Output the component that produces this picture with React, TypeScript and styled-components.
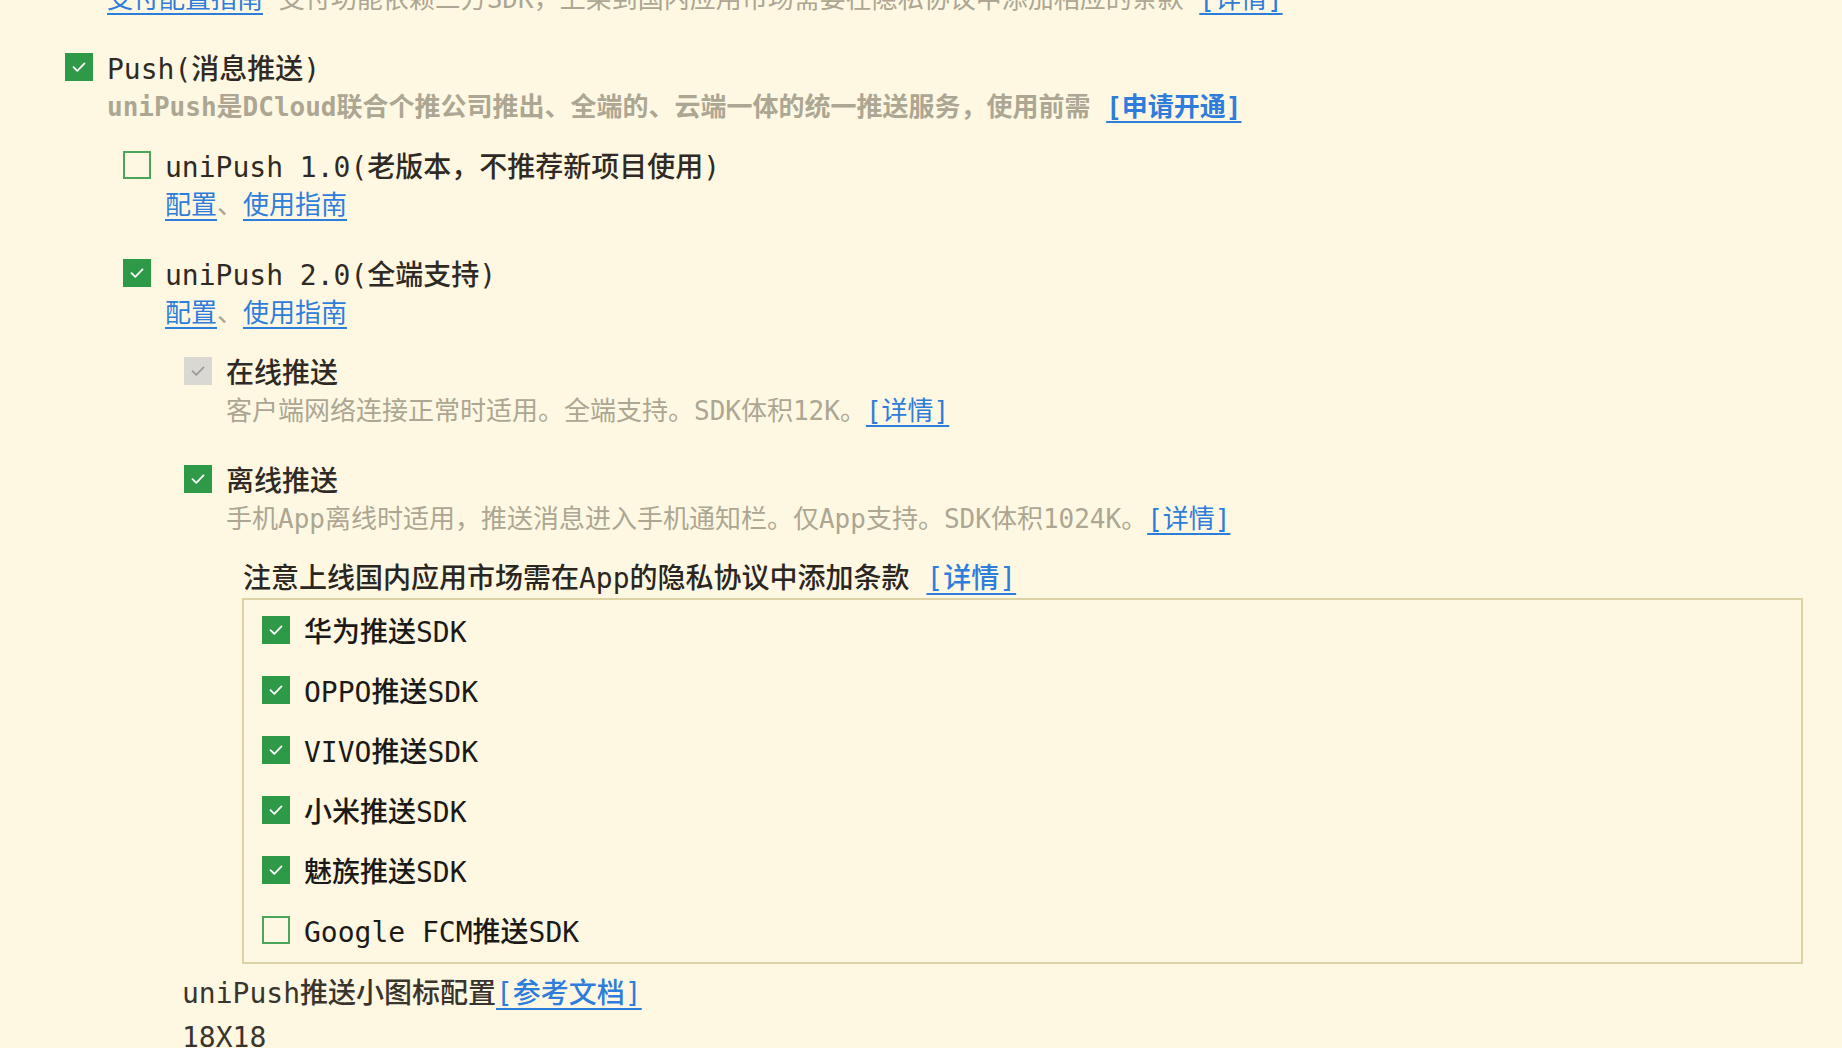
import React, {FC, ReactNode} from 'react';
import styled, {createGlobalStyle} from 'styled-components';

const GlobalStyle = createGlobalStyle`
  html, body {
    margin: 0;
    padding: 0;
    background: #fef8e2;
    overflow: hidden;
  }
`;

const Page = styled.div`
  margin-top: -22px;
  padding: 0 39px 0 65px;
  font-family: "DejaVu Sans Mono", "Noto Sans CJK SC", monospace;
  color: #2f2a25;
`;

const Block = styled.div`
  & + & {
    margin-top: 30px;
  }
`;

const Group = styled.div<{ $indent: number }>`
  margin-left: ${(p) => p.$indent}px;
  padding-top: 20px;
`;

const OptionRow = styled.div`
  display: flex;
  align-items: center;
  gap: 14px;
  height: 38px;
  font-size: 28px;
  font-weight: 500;
  white-space: pre;
`;

const Hint = styled.div<{ $bold?: boolean }>`
  margin-top: 2px;
  padding-left: 42px;
  font-size: 26px;
  line-height: 38px;
  color: #aca693;
  font-weight: ${(p) => (p.$bold ? 700 : 400)};
  white-space: pre;
`;

const Link = styled.a`
  color: #2f7ddb;
  text-decoration: underline;
  text-underline-offset: 5px;
  text-decoration-thickness: 2px;
  cursor: pointer;
`;

const Box = styled.span<{ $state: 'on' | 'off' | 'disabled' }>`
  flex: none;
  box-sizing: border-box;
  width: 28px;
  height: 28px;
  display: flex;
  align-items: center;
  justify-content: center;
  background: ${(p) => (p.$state === 'on' ? '#2e9a48' : p.$state === 'disabled' ? '#d9d8d3' : 'transparent')};
  border: ${(p) => (p.$state === 'off' ? '2px solid #4aa55a' : 'none')};
`;

const Note = styled.div`
  margin-left: 59px;
  margin-top: 22px;
  font-size: 28px;
  font-weight: 500;
  line-height: 38px;
  color: #2a2622;
  white-space: pre;
`;

const SdkPanel = styled.div`
  margin: 0 0 0 58px;
  border: 2px solid #ddd2a6;
  padding: 0 18px 2px;
`;

const SdkRow = styled(OptionRow)`
  height: 60px;
  color: #1c1a18;
`;

const IconConfig = styled.div`
  margin: 11px 0 0 -2px;
  font-size: 28px;
  font-weight: 500;
  line-height: 38px;
  color: #3a342e;
  white-space: pre;
`;

const SizeLabel = styled(IconConfig)`
  margin-top: 6px;
`;

const Check: FC<{ state: 'on' | 'off' | 'disabled' }> = ({state}) => (
  <Box $state={state}>
    {state !== 'off' && (
      <svg width="28" height="28" viewBox="0 0 28 28">
        <path
          d="M8.5 14.2 L12.3 17.8 L19.5 10.4"
          fill="none"
          stroke={state === 'on' ? '#ffffff' : '#9c9b97'}
          strokeWidth="1.8"
          strokeLinecap="round"
          strokeLinejoin="round"
        />
      </svg>
    )}
  </Box>
);

const Option: FC<{ state: 'on' | 'off' | 'disabled'; children: ReactNode }> = ({state, children}) => (
  <OptionRow>
    <Check state={state}/>
    <span>{children}</span>
  </OptionRow>
);

const Sep = styled.span`
  color: #aca693;
`;

const ConfigLinks: FC = () => (
  <Hint>
    <Link>配置</Link>
    <Sep>、</Sep>
    <Link>使用指南</Link>
  </Hint>
);

const sdkList: { name: string; on: boolean }[] = [
  {name: '华为推送SDK', on: true},
  {name: 'OPPO推送SDK', on: true},
  {name: 'VIVO推送SDK', on: true},
  {name: '小米推送SDK', on: true},
  {name: '魅族推送SDK', on: true},
  {name: 'Google FCM推送SDK', on: false},
];

const App: FC = () => {
  return (
    <>
      <GlobalStyle/>
      <Page>
        <Block>
          <Hint>
            <Link>支付配置指南</Link>
            {' 支付功能依赖三方SDK，上架到国内应用市场需要在隐私协议中添加相应的条款 '}
            <Link>[详情]</Link>
          </Hint>
        </Block>

        <Block>
          <Option state="on">Push(消息推送)</Option>
          <Hint $bold>
            {'uniPush是DCloud联合个推公司推出、全端的、云端一体的统一推送服务，使用前需 '}
            <Link>[申请开通]</Link>
          </Hint>

          <Group $indent={58}>
            <Block>
              <Option state="off">uniPush 1.0(老版本，不推荐新项目使用)</Option>
              <ConfigLinks/>
            </Block>

            <Block>
              <Option state="on">uniPush 2.0(全端支持)</Option>
              <ConfigLinks/>

              <Group $indent={61}>
                <Block>
                  <Option state="disabled">在线推送</Option>
                  <Hint>
                    客户端网络连接正常时适用。全端支持。SDK体积12K。
                    <Link>[详情]</Link>
                  </Hint>
                </Block>

                <Block>
                  <Option state="on">离线推送</Option>
                  <Hint>
                    手机App离线时适用，推送消息进入手机通知栏。仅App支持。SDK体积1024K。
                    <Link>[详情]</Link>
                  </Hint>
                  <Note>
                    {'注意上线国内应用市场需在App的隐私协议中添加条款 '}
                    <Link>[详情]</Link>
                  </Note>
                  <SdkPanel>
                    {sdkList.map((sdk) => (
                      <SdkRow key={sdk.name}>
                        <Check state={sdk.on ? 'on' : 'off'}/>
                        <span>{sdk.name}</span>
                      </SdkRow>
                    ))}
                  </SdkPanel>
                </Block>

                <IconConfig>
                  uniPush推送小图标配置<Link>[参考文档]</Link>
                </IconConfig>
                <SizeLabel>18X18</SizeLabel>
              </Group>
            </Block>
          </Group>
        </Block>
      </Page>
    </>
  );
};

export default App;
